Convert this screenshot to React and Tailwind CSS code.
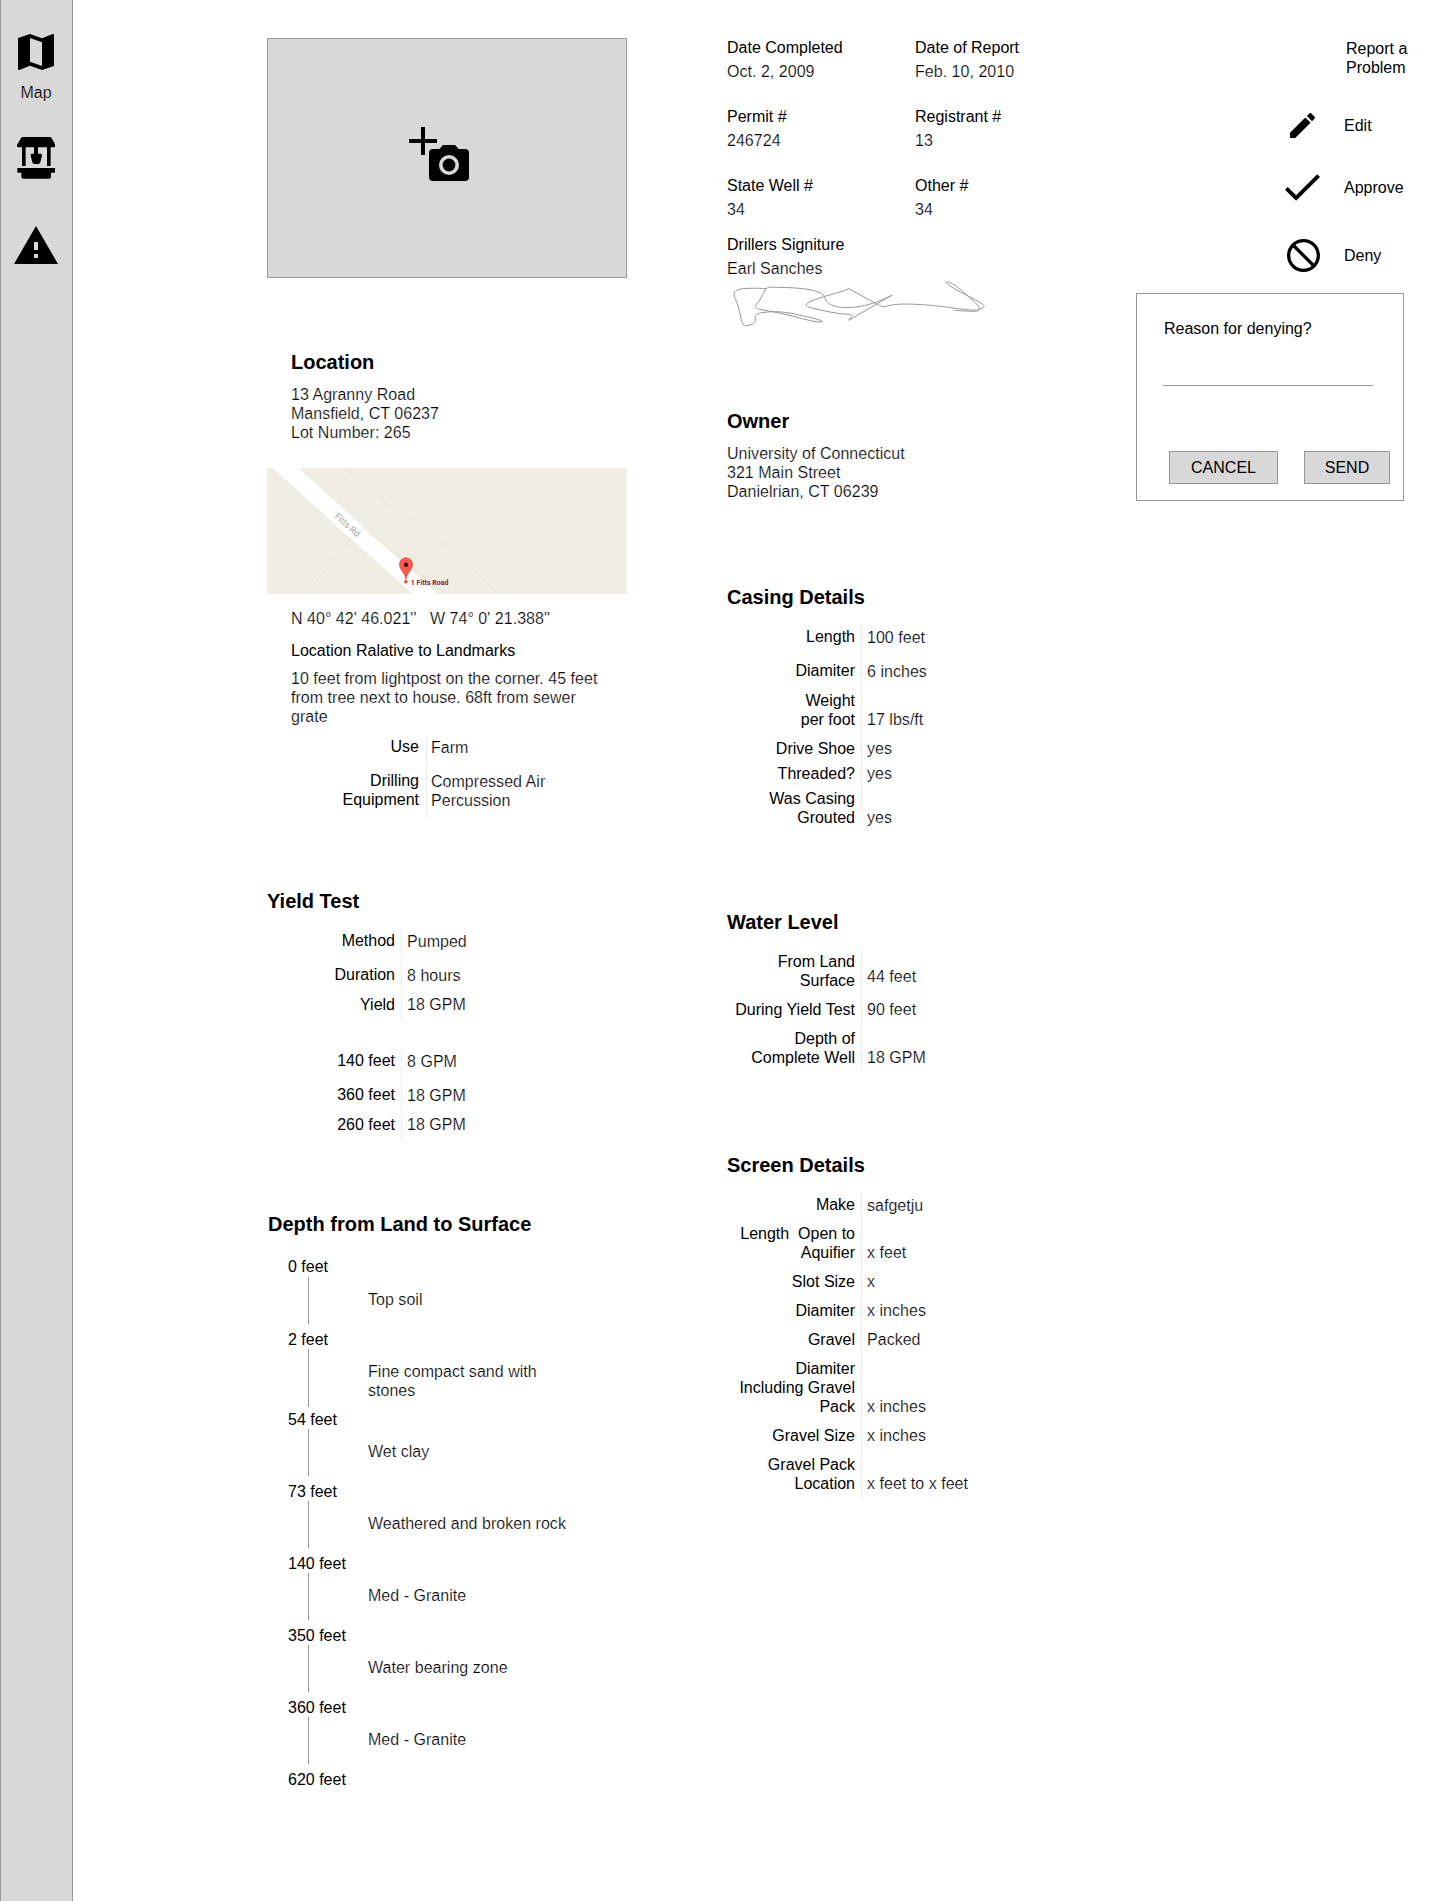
import React from "react";

const LIGHT = "text-black tracking-[0.03px] [-webkit-text-stroke:0.22px_white]";

function Heading({ children, className = "" }) {
  return <h2 className={`text-[20px] leading-[24px] font-bold ${className}`}>{children}</h2>;
}

/* Right-aligned labels, a hairline, and the values beside them. */
function Details({ labels, values, rule, ruleGap = "ml-[6px]", valueGap = "ml-[5px]", labelWidth = "w-[128px]" }) {
  return (
    <div className="flex items-start">
      <div className={`${labelWidth} shrink-0 text-right`}>
        {labels.map(([text, mt], i) => (
          <div key={i} className={`whitespace-pre ${mt}`}>{text}</div>
        ))}
      </div>
      <div className={`w-px shrink-0 bg-[#ececec] ${ruleGap} ${rule}`} />
      <div className={`${valueGap} ${LIGHT}`}>
        {values.map(([text, mt], i) => (
          <div key={i} className={`whitespace-pre ${mt}`}>{text}</div>
        ))}
      </div>
    </div>
  );
}

function Fact({ label, value }) {
  return (
    <div>
      <div>{label}</div>
      <div className={`mt-[5px] ${LIGHT}`}>{value}</div>
    </div>
  );
}

function Sidebar() {
  return (
    <nav className="flex w-[73px] shrink-0 flex-col items-center border-x border-[#979797] bg-[#d8d8d8] pr-px pt-[28px]">
      <svg width="48" height="48" viewBox="0 0 24 24">
        <path d="M20.5 3l-.16.03L15 5.1 9 3 3.36 4.9c-.21.07-.36.25-.36.48V20.5c0 .28.22.5.5.5l.16-.03L9 18.9l6 2.1 5.64-1.9c.21-.07.36-.25.36-.48V3.5c0-.28-.22-.5-.5-.5zM15 19l-6-2.11V5l6 2.11V19z" />
      </svg>
      <div className="mt-[7px] [-webkit-text-stroke:0.22px_#d8d8d8]">Map</div>
      <svg className="mt-[35px]" width="38" height="42" viewBox="51 411 114 126">
        <path d="M70 411h79q4 0 6 3l11 21q2 7-5 7H56q-7 0-5-7l12-21q2-3 7-3z" />
        <path d="M66 440h11v58H66zM141 440h11v58h-11zM102 440h12v22h-12z" />
        <path d="M95 461h27q5 0 4 6l-5 20q-1 5-6 5h-12q-5 0-6-5l-5-20q-1-6 3-6z" />
        <path d="M52 504h113v13q0 1-2 1h-10v12q0 6-6 6H70q-6 0-6-6v-12H54q-2 0-2-1z" />
      </svg>
      <svg className="mt-[47px]" width="44" height="38" viewBox="1 2 22 19">
        <path d="M1 21h22L12 2 1 21zm12-3h-2v-2h2v2zm0-4h-2v-4h2v4z" />
      </svg>
    </nav>
  );
}

function PhotoDrop() {
  return (
    <div className="h-[240px] border border-[#979797] bg-[#d8d8d8] pl-[141px] pt-[88px]">
      <svg width="60" height="54" viewBox="0 0 60 54">
        <path d="M12 0h4v12h12v4H16v12h-4V16H0v-4h12z" />
        <path
          fillRule="evenodd"
          d="M34 18h12l3.700 4H56a4 4 0 0 1 4 4v24a4 4 0 0 1-4 4H24a4 4 0 0 1-4-4V26a4 4 0 0 1 4-4h6.300zM40 28a10 10 0 1 0 0 20 10 10 0 0 0 0-20z"
        />
        <circle cx="40" cy="38" r="6.400" />
      </svg>
    </div>
  );
}

function MiniMap() {
  return (
    <svg className="mt-[26px] block" width="360" height="126" viewBox="0 0 360 126">
      <rect width="360" height="126" fill="#f0ede5" />
      <path d="M5.300 0H31.300L170.700 126H145.700z" fill="#fff" />
      <g fill="none" stroke="#e6e3da" strokeWidth="1">
        <path d="M75.700 0L112 29L196.300 90L231 126" />
        <path d="M96 60L179 126" />
        <path d="M84 70.300L38.700 126" />
      </g>
      <text transform="translate(67 49) rotate(42)" className="font-['Roboto'] text-[9px]" fill="#a0a0a0">
        Fitts Rd
      </text>
      <path
        d="M139 111.500C138.600 105 132.500 102.500 132.500 96.300a6.500 6.500 0 0 1 13 0C145.500 102.500 139.400 105 139 111.500z"
        fill="#fb5a4e"
        stroke="#c8403a"
        strokeWidth="0.700"
      />
      <circle cx="139" cy="96.700" r="2.200" fill="#4d0d0a" />
      <circle cx="138.800" cy="113.700" r="1.900" fill="#ea4335" stroke="#fff" strokeWidth="0.400" />
      <text x="143.800" y="116.700" className="font-['Roboto'] text-[7px] font-bold" fill="#8c1f1f">
        1 Fitts Road
      </text>
    </svg>
  );
}

const LAYERS = [
  ["0 feet", "Top soil", "h-[73px]", "mt-px h-[47px]", "mt-[33px]"],
  ["2 feet", "Fine compact sand with\nstones", "h-[80px]", "h-[58px]", "mt-[32px]"],
  ["54 feet", "Wet clay", "h-[72px]", "h-[47px]", "mt-[32px]"],
  ["73 feet", "Weathered and broken rock", "h-[72px]", "h-[47px]", "mt-[32px]"],
  ["140 feet", "Med - Granite", "h-[72px]", "h-[47px]", "mt-[32px]"],
  ["350 feet", "Water bearing zone", "h-[72px]", "h-[47px]", "mt-[32px]"],
  ["360 feet", "Med - Granite", "h-[72px]", "h-[47px]", "mt-[32px]"],
  ["620 feet", "", "h-[19px]", "h-0", "mt-0"],
];

function DepthChart() {
  return (
    <div className="mt-[21px] pl-[21px]">
      {LAYERS.map(([depth, soil, height, line, top]) => (
        <div key={depth} className={`flex ${height}`}>
          <div className="w-[80px] shrink-0">
            <div>{depth}</div>
            <div className={`ml-[20px] w-px bg-[#979797] ${line}`} />
          </div>
          <div className={`whitespace-pre ${top} ${LIGHT}`}>{soil}</div>
        </div>
      ))}
    </div>
  );
}

function LeftColumn() {
  return (
    <section className="w-[360px] shrink-0 pt-[38px]">
      <PhotoDrop />
      <div className="mt-[72px] pl-[24px]">
        <Heading>Location</Heading>
        <p className={`mt-[11px] ${LIGHT}`}>
          13 Agranny Road
          <br />
          Mansfield, CT 06237
          <br />
          Lot Number: 265
        </p>
      </div>
      <MiniMap />
      <div className="mt-[15px] pl-[24px]">
        <div className={`whitespace-pre ${LIGHT}`}>{"N 40° 42' 46.021''   W 74° 0' 21.388''"}</div>
        <div className="mt-[13px]">Location Ralative to Landmarks</div>
        <p className={`mt-[9px] whitespace-pre ${LIGHT}`}>
          {"10 feet from lightpost on the corner. 45 feet\nfrom tree next to house. 68ft from sewer\ngrate"}
        </p>
        <div className="mt-[9px]">
          <Details
            labels={[["Use", "mt-[2px]"], ["Drilling\nEquipment", "mt-[15px]"]]}
            values={[["Farm", "mt-[3px]"], ["Compressed Air\nPercussion", "mt-[15px]"]]}
            rule="h-[83px]"
            ruleGap="ml-[7px]"
            valueGap="ml-[4px]"
          />
        </div>
      </div>
      <Heading className="mt-[71px]">Yield Test</Heading>
      <div className="mt-[16px]">
        <Details
          labels={[["Method", "mt-[2px]"], ["Duration", "mt-[15px]"], ["Yield", "mt-[11px]"]]}
          values={[["Pumped", "mt-[3px]"], ["8 hours", "mt-[15px]"], ["18 GPM", "mt-[10px]"]]}
          rule="h-[91px]"
        />
      </div>
      <div className="mt-[29px]">
        <Details
          labels={[["140 feet", "mt-[2px]"], ["360 feet", "mt-[15px]"], ["260 feet", "mt-[11px]"]]}
          values={[["8 GPM", "mt-[3px]"], ["18 GPM", "mt-[15px]"], ["18 GPM", "mt-[10px]"]]}
          rule="h-[91px]"
        />
      </div>
      <Heading className="ml-px mt-[72px]">Depth from Land to Surface</Heading>
      <DepthChart />
    </section>
  );
}

function Signature() {
  return (
    <svg className="ml-[3px] block" width="260" height="50" viewBox="60 774 780 150" fill="none" stroke="#979797" strokeWidth="3">
      <path d="M168 806C140 804 100 804 88 808C70 812 68 825 78 842C92 868 90 910 103 916C118 919 138 910 137 900C132 888 140 882 152 879C175 875 210 870 270 886C300 892 330 898 338 905C330 909 290 900 270 894C220 880 175 873 150 868C138 866 132 862 137 856C150 840 158 825 166 810C170 800 180 801 200 802C260 803 325 806 343 828C346 840 350 848 365 855C400 870 470 865 545 826L416 901C425 890 430 883 415 883C380 882 340 872 305 864C283 859 284 853 300 845C330 830 380 822 417 806L480 841C500 850 510 861 525 860C550 852 580 851 620 853C660 855 700 860 730 864C770 869 790 872 805 869C822 865 826 859 818 853C800 840 780 832 765 823C735 808 708 792 709 786C716 782 745 802 760 816C790 842 812 860 808 869C806 876 795 875 733 871" />
    </svg>
  );
}

function MiddleColumn() {
  return (
    <section className="ml-[100px] w-[380px] shrink-0 pt-[38px]">
      <div className="grid grid-cols-[188px_1fr] gap-y-[26px]">
        <Fact label="Date Completed" value="Oct. 2, 2009" />
        <Fact label="Date of Report" value="Feb. 10, 2010" />
        <Fact label="Permit #" value="246724" />
        <Fact label="Registrant #" value="13" />
        <Fact label="State Well #" value="34" />
        <Fact label="Other #" value="34" />
      </div>
      <div className="mt-[16px]">
        <Fact label="Drillers Signiture" value="Earl Sanches" />
      </div>
      <Signature />
      <Heading className="mt-[81px]">Owner</Heading>
      <p className={`mt-[11px] ${LIGHT}`}>
        University of Connecticut
        <br />
        321 Main Street
        <br />
        Danielrian, CT 06239
      </p>
      <Heading className="mt-[84px]">Casing Details</Heading>
      <div className="mt-[16px]">
        <Details
          labels={[
            ["Length", "mt-[2px]"],
            ["Diamiter", "mt-[15px]"],
            ["Weight\nper foot", "mt-[11px]"],
            ["Drive Shoe", "mt-[10px]"],
            ["Threaded?", "mt-[6px]"],
            ["Was Casing\nGrouted", "mt-[6px]"],
          ]}
          values={[
            ["100 feet", "mt-[3px]"],
            ["6 inches", "mt-[15px]"],
            ["17 lbs/ft", "mt-[29px]"],
            ["yes", "mt-[10px]"],
            ["yes", "mt-[6px]"],
            ["yes", "mt-[25px]"],
          ]}
          rule="h-[188px]"
        />
      </div>
      <Heading className="mt-[83px]">Water Level</Heading>
      <div className="mt-[16px]">
        <Details
          labels={[
            ["From Land\nSurface", "mt-[2px]"],
            ["During Yield Test", "mt-[10px]"],
            ["Depth of\nComplete Well", "mt-[10px]"],
          ]}
          values={[["44 feet", "mt-[17px]"], ["90 feet", "mt-[14px]"], ["18 GPM", "mt-[29px]"]]}
          rule="h-[120px]"
        />
      </div>
      <Heading className="mt-[83px]">Screen Details</Heading>
      <div className="mt-[16px]">
        <Details
          labels={[
            ["Make", "mt-[2px]"],
            ["Length  Open to\nAquifier", "mt-[10px]"],
            ["Slot Size", "mt-[10px]"],
            ["Diamiter", "mt-[10px]"],
            ["Gravel", "mt-[10px]"],
            ["Diamiter\nIncluding Gravel\nPack", "mt-[10px]"],
            ["Gravel Size", "mt-[10px]"],
            ["Gravel Pack\nLocation", "mt-[10px]"],
          ]}
          values={[
            ["safgetju", "mt-[3px]"],
            ["x feet", "mt-[28px]"],
            ["x", "mt-[10px]"],
            ["x inches", "mt-[10px]"],
            ["Packed", "mt-[10px]"],
            ["x inches", "mt-[48px]"],
            ["x inches", "mt-[10px]"],
            ["x feet to x feet", "mt-[29px]"],
          ]}
          rule="h-[306px]"
        />
      </div>
    </section>
  );
}

function Actions() {
  return (
    <aside className="ml-[29px] w-[268px] shrink-0 pt-[39px]">
      <div className="ml-[210px] whitespace-pre">{"Report a\nProblem"}</div>
      <button className="ml-[154px] mt-[36px] flex h-[25px] items-center">
        <svg width="25" height="25" viewBox="3 3 18 18">
          <path d="M3 17.250V21h3.750L17.810 9.940l-3.750-3.750L3 17.250zM20.710 7.040c.39-.39.39-1.020 0-1.410l-2.340-2.340c-.39-.39-1.020-.39-1.410 0l-1.830 1.830 3.750 3.750 1.830-1.830z" />
        </svg>
        <span className="ml-[29px]">Edit</span>
      </button>
      <button className="ml-[149px] mt-[36px] flex h-[27px] items-center">
        <svg width="35" height="27" viewBox="3.400 5.600 17.600 13.400">
          <path d="M9 16.200L4.800 12l-1.400 1.400L9 19 21 7l-1.400-1.400L9 16.200z" />
        </svg>
        <span className="ml-[24px]">Approve</span>
      </button>
      <button className="ml-[151px] mt-[38px] flex h-[33px] items-center">
        <svg width="33" height="33" viewBox="2 2 20 20">
          <path d="M12 2C6.480 2 2 6.480 2 12s4.480 10 10 10 10-4.480 10-10S17.520 2 12 2zM4 12c0-4.420 3.580-8 8-8 1.850 0 3.550.63 4.900 1.690L5.690 16.900C4.630 15.550 4 13.850 4 12zm8 8c-1.850 0-3.550-.63-4.900-1.690L18.310 7.100C19.370 8.450 20 10.150 20 12c0 4.420-3.580 8-8 8z" transform="matrix(-1 0 0 1 24 0)" />
        </svg>
        <span className="ml-[24px]">Deny</span>
      </button>
      <div className="mt-[21px] h-[208px] border border-[#979797] pl-[26px] pt-[25px]">
        <div className="pl-px">Reason for denying?</div>
        <div className="mt-[47px] h-px w-[210px] bg-[#979797]" />
        <div className="ml-[6px] mt-[65px] flex gap-[26px]">
          <button className="h-[33px] w-[109px] border border-[#979797] bg-[#d8d8d8]">CANCEL</button>
          <button className="h-[33px] w-[86px] border border-[#979797] bg-[#d8d8d8]">SEND</button>
        </div>
      </div>
    </aside>
  );
}

export default function App() {
  return (
    <div className="flex h-[1901px] w-[1440px] overflow-hidden bg-white font-['Liberation_Sans',Arial,sans-serif] text-[16px] leading-[19px] text-black">
      <Sidebar />
      <main className="flex pl-[194px]">
        <LeftColumn />
        <MiddleColumn />
        <Actions />
      </main>
    </div>
  );
}
